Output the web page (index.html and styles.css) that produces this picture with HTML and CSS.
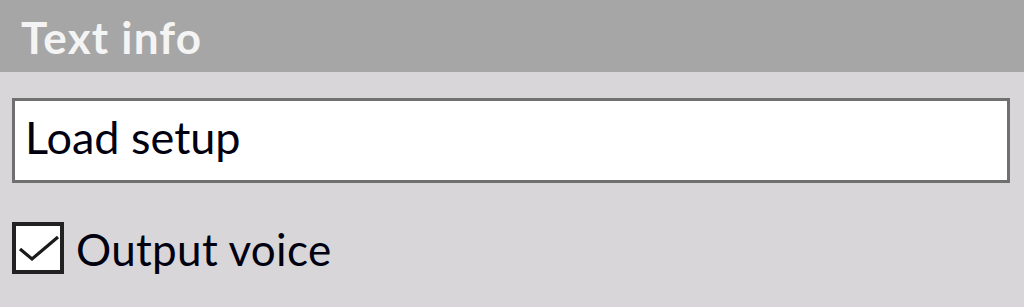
FILE: index.html
```html
<!DOCTYPE html>
<html lang="en">
<head>
<meta charset="utf-8">
<title>Text info</title>
<link rel="stylesheet" href="styles.css">
</head>
<body>
<div class="panel">
  <div class="panel-header">Text info</div>
  <div class="panel-body">
    <div class="text-field">Load setup</div>
    <label class="check-row">
      <span class="check-box">
        <svg viewBox="0 0 44 44" width="44" height="44" aria-hidden="true">
          <polyline points="4,23 16,33 42,11" fill="none" stroke="#1a1a1a" stroke-width="3.2" stroke-linejoin="miter" stroke-linecap="butt"/>
        </svg>
      </span>
      <span class="check-label">Output voice</span>
    </label>
  </div>
</div>
</body>
</html>
```
FILE: styles.css
```css
html, body {
  margin: 0;
  padding: 0;
}
body {
  background: #d8d6d8;
  font-family: Lato, "Open Sans", sans-serif;
  width: 1024px;
  height: 307px;
  overflow: hidden;
}
.panel {
  display: flex;
  flex-direction: column;
}
.panel-header {
  height: 72px;
  box-sizing: border-box;
  background: #a6a6a6;
  color: #f4f4f4;
  font-weight: 700;
  font-size: 44px;
  letter-spacing: 1.2px;
  line-height: 72px;
  padding: 1px 0 0 21px;
}
.panel-body {
  display: flex;
  flex-direction: column;
  padding: 26px 14px 0 12px;
  gap: 39px;
}
.text-field {
  height: 85px;
  box-sizing: border-box;
  border: 3px solid #707070;
  background: #ffffff;
  color: #000010;
  font-size: 45px;
  line-height: 73px;
  padding: 0 0 6px 10px;
}
.check-row {
  display: flex;
  align-items: center;
  gap: 12px;
  height: 52px;
}
.check-box {
  width: 52px;
  height: 52px;
  box-sizing: border-box;
  border: 4px solid #222222;
  background: #ffffff;
  display: block;
}
.check-box svg {
  display: block;
}
.check-label {
  font-size: 44px;
  letter-spacing: 0.3px;
  line-height: 52px;
  color: #000010;
  padding-top: 1px;
}
```
